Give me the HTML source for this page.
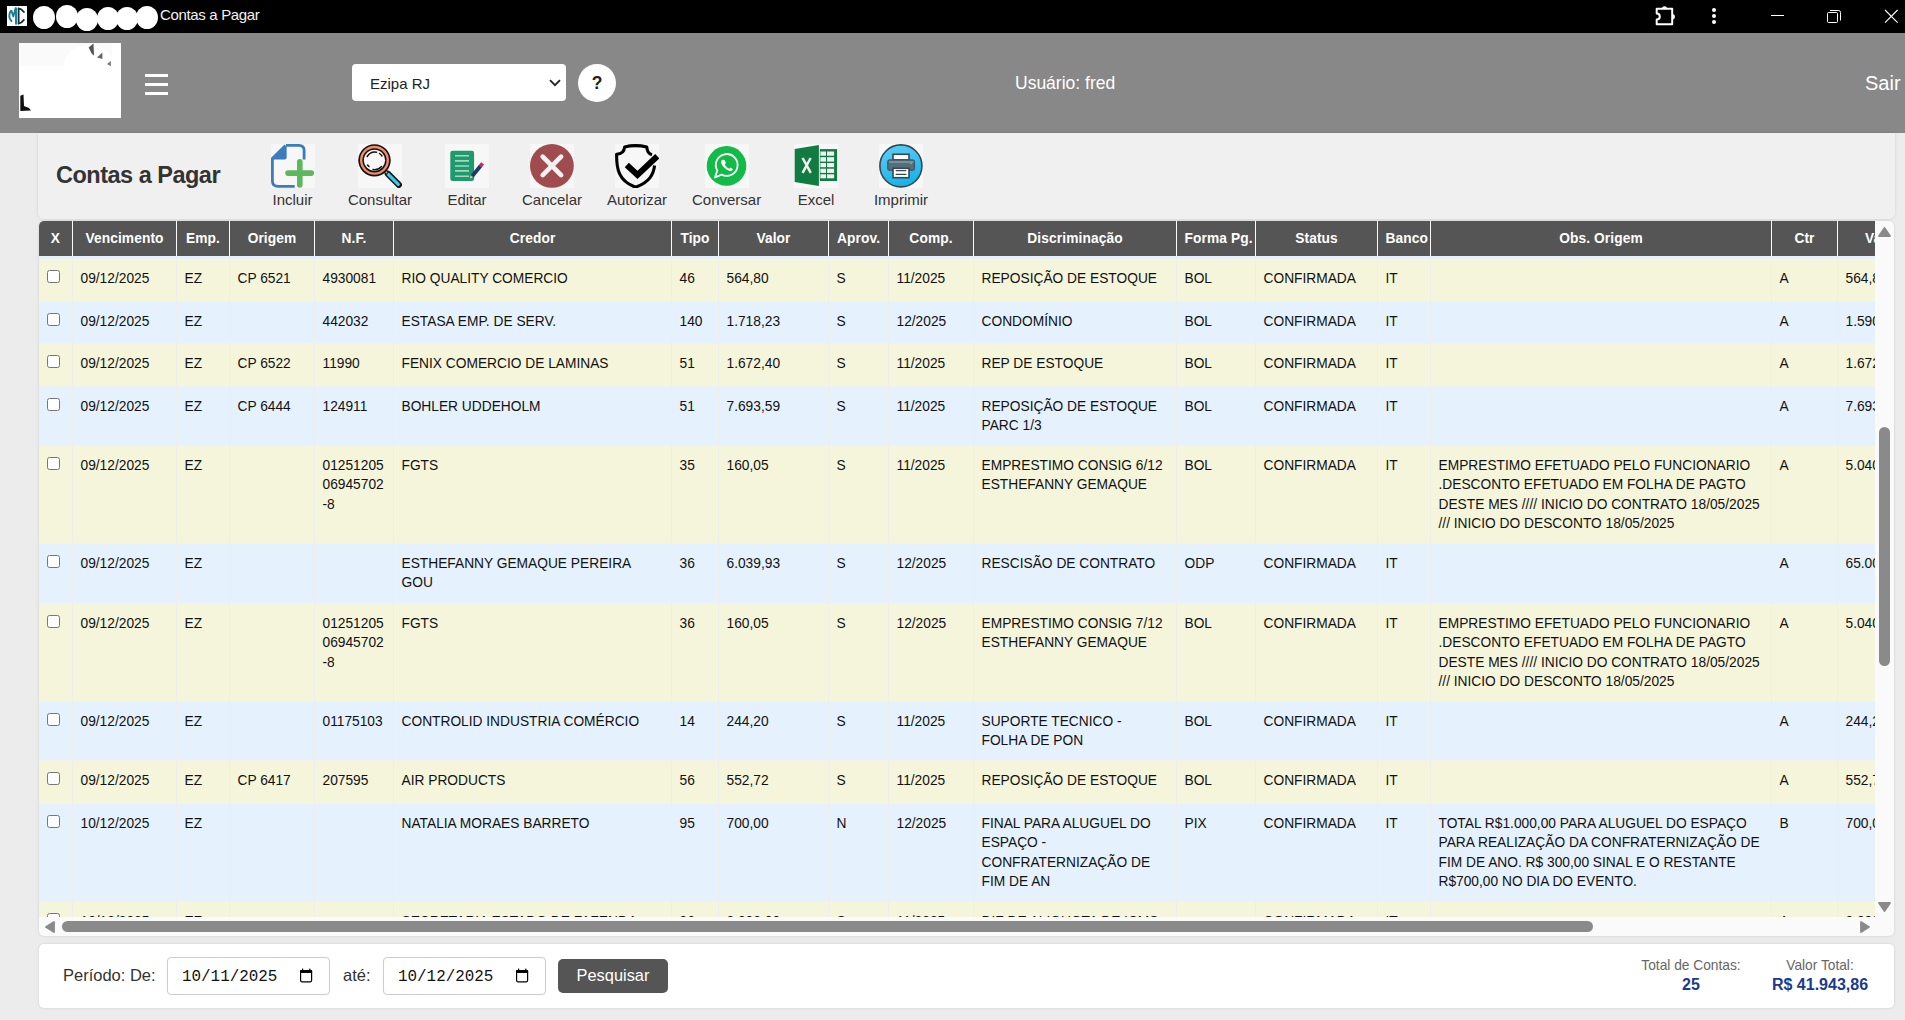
<!DOCTYPE html>
<html><head><meta charset="utf-8"><title>Contas a Pagar</title>
<style>
*{box-sizing:border-box;margin:0;padding:0}
html,body{width:1905px;height:1020px;overflow:hidden;background:#ececec;font-family:"Liberation Sans",sans-serif;position:relative}
.abs{position:absolute}
#titlebar{left:0;top:0;width:1905px;height:33px;background:#000}
#hdr{left:0;top:33px;width:1905px;height:100px;background:#888}
.card{position:absolute;box-shadow:0 0 3px rgba(0,0,0,.12)}
.tb{position:absolute;top:144px;width:120px;margin-left:-60px;text-align:center}
.tb .ic{position:absolute;left:38px;top:0;width:44px;height:44px;background:#f7f7f7}
.tb .lb{position:absolute;left:0;top:47px;width:120px;text-align:center;font-size:15px;color:#333;line-height:17px;white-space:nowrap}
.th{position:absolute;top:221px;height:35px;background:#555;color:#fff;font-weight:bold;font-size:13.75px;text-align:center;line-height:35px;white-space:nowrap;overflow:hidden;padding:0 7.5px;letter-spacing:0.1px}
.row{position:absolute;left:39px;width:1836px}
.td{position:absolute;top:0;bottom:0;font-size:13.75px;line-height:19.3px;color:#111;padding:11px 7.5px 9px 7.5px;overflow:hidden;white-space:normal}
.vl{position:absolute;width:1px;background:#eeeeec}
</style></head><body>

<div id="titlebar" class="abs">
<div class="abs" style="left:7px;top:6px;width:20px;height:20px;background:#fff"><svg width="20" height="20" viewBox="0 0 20 20"><path d="M9 1.8 V18.6" stroke="#0f7f8f" stroke-width="1.9"/><path d="M4.5 15.2 C2.5 13 2 11 2.4 9 C2.7 6.5 3.5 5 4.4 4.6 L6.3 10.5 L8.6 2.2" fill="none" stroke="#13808f" stroke-width="1.8" stroke-linejoin="round" stroke-linecap="round"/><path d="M16.9 6.1 C15.3 3.8 13.3 2.6 11.6 2.4 V17.6 C13.3 17.4 15.3 16 16.9 13.9" fill="none" stroke="#1a2a38" stroke-width="1.8" stroke-linecap="round"/></svg></div>
<div class="abs" style="left:33.3px;top:5.800000000000001px;width:22px;height:23px;border-radius:50%;background:#fff"></div>
<div class="abs" style="left:56px;top:4.800000000000001px;width:22px;height:23px;border-radius:50%;background:#fff"></div>
<div class="abs" style="left:76px;top:7.899999999999999px;width:22px;height:23px;border-radius:50%;background:#fff"></div>
<div class="abs" style="left:96.5px;top:6.800000000000001px;width:22px;height:23px;border-radius:50%;background:#fff"></div>
<div class="abs" style="left:116px;top:6.800000000000001px;width:22px;height:23px;border-radius:50%;background:#fff"></div>
<div class="abs" style="left:136.2px;top:5.800000000000001px;width:22px;height:23px;border-radius:50%;background:#fff"></div>
<div class="abs" style="left:160px;top:6px;font-size:15px;letter-spacing:-0.34px;color:#f2f2f2;line-height:18px;white-space:nowrap">Contas a Pagar</div>
<svg class="abs" style="left:1645px;top:0px" width="35" height="33" viewBox="0 0 35 33"><path d="M11.7 8.8 H27.2 V24.2 H11.7 V19.6 A3.1 3.1 0 0 0 11.7 13.4 Z" fill="none" stroke="#fff" stroke-width="2" stroke-linejoin="round"/><path d="M16.9 8.8 A2.6 2.6 0 0 1 22.1 8.8 Z" fill="#fff"/><path d="M27.2 14 A2.7 2.7 0 0 1 27.2 19.4 Z" fill="#fff"/></svg>
<div class="abs" style="left:1712px;top:8px;width:4px;height:4px;border-radius:50%;background:#fff"></div>
<div class="abs" style="left:1712px;top:14px;width:4px;height:4px;border-radius:50%;background:#fff"></div>
<div class="abs" style="left:1712px;top:20.4px;width:4px;height:4px;border-radius:50%;background:#fff"></div>
<div class="abs" style="left:1771px;top:15px;width:13px;height:1px;background:#fff"></div>
<svg class="abs" style="left:1826px;top:9px" width="16" height="16" viewBox="0 0 16 16"><rect x="1.5" y="3.5" width="10" height="10" rx="1" fill="none" stroke="#fff" stroke-width="1"/><path d="M4 1.5 H12.5 Q14.5 1.5 14.5 3.5 V11.5" fill="none" stroke="#fff" stroke-width="1"/></svg>
<svg class="abs" style="left:1884px;top:9px" width="15" height="15" viewBox="0 0 15 15"><path d="M1 1 L13.6 13.6 M13.6 1 L1 13.6" stroke="#fff" stroke-width="1.1"/></svg>
</div>
<div id="hdr" class="abs">
<div class="abs" style="left:19px;top:10px;width:102px;height:75px;background:#fff;overflow:hidden"><div class="abs" style="left:1px;top:0;width:92px;height:23px;background:#fafafa"></div><div class="abs" style="left:45px;top:2px;width:50px;height:40px;border-radius:50%;background:#fff"></div><svg class="abs" style="left:0;top:0" width="102" height="75" viewBox="0 0 102 75"><path d="M69.6 4.5 L74.5 0.5 L75 12.5 L73 11 Z" fill="#555"/><path d="M78 14.5 L83.4 9.4 L83.4 16.1 Z" fill="#666"/><path d="M88 21 L91.9 17.9 L91.9 23.2 Z" fill="#777"/><path d="M1.3 52.7 L4.5 51.5 L5 63 L10 65 L12 67.6 L1.3 68 Z" fill="#111"/></svg></div>
<div class="abs" style="left:145px;top:41px;width:23px;height:3px;background:#fff"></div>
<div class="abs" style="left:145px;top:50px;width:23px;height:3px;background:#fff"></div>
<div class="abs" style="left:145px;top:59px;width:23px;height:3px;background:#fff"></div>
<div class="abs" style="left:352px;top:31px;width:214px;height:37px;background:#fff;border-radius:4px"><div class="abs" style="left:18px;top:11px;font-size:15px;color:#222;line-height:18px">Ezipa RJ</div><svg class="abs" style="left:197px;top:15px" width="12" height="8" viewBox="0 0 12 8"><path d="M1 1.2 L6 6.2 L11 1.2" fill="none" stroke="#222" stroke-width="1.8"/></svg></div>
<div class="abs" style="left:578px;top:31px;width:38px;height:38px;background:#fff;border-radius:50%;text-align:center;font-weight:bold;font-size:17.5px;line-height:38px;color:#222">?</div>
<div class="abs" style="left:1015px;top:40px;font-size:17.5px;color:#fff;line-height:20px;white-space:nowrap">Usuário: fred</div>
<div class="abs" style="left:1865px;top:38px;font-size:20px;color:#fff;line-height:24px;white-space:nowrap">Sair</div>
</div>
<div class="card" style="left:38px;top:133px;width:1857px;height:86px;background:#f0f0f0;border-radius:0 0 6px 6px"></div>
<div class="abs" style="left:56px;top:162px;font-size:23.5px;letter-spacing:-0.5px;font-weight:bold;color:#333;line-height:26px;white-space:nowrap">Contas a Pagar</div>
<div class="tb" style="left:292.5px"><div class="ic"><svg width="44" height="44" viewBox="0 0 44 44"><path d="M15 1.4 H28 Q33.1 1.4 33.1 6.5 V15.5 M23.7 42.4 H7 Q1.4 42.4 1.4 37 V14.5 L14.5 1.4" fill="none" stroke="#3b7bc0" stroke-width="2.8" stroke-linejoin="round"/><path d="M1.4 15.6 L15.6 1.4 V13.5 Q15.6 15.6 13.5 15.6 Z" fill="#3b7bc0"/><path d="M28.8 17.7 V41 M17 29.1 H40.3" stroke="#5cb85c" stroke-width="5.6" stroke-linecap="round"/></svg></div><div class="lb">Incluir</div></div>
<div class="tb" style="left:380px"><div class="ic"><svg width="44" height="44" viewBox="0 0 44 44"><path d="M29.8 29.8 L40.8 40.8" stroke="#111" stroke-width="6.2" stroke-linecap="round"/><path d="M30.3 30.3 L40.3 40.3" stroke="#3ccbef" stroke-width="3.2" stroke-linecap="round"/><circle cx="28.3" cy="28.3" r="1.6" fill="#f0896a" stroke="#111" stroke-width="1"/><circle cx="16.5" cy="16.35" r="16.2" fill="#111"/><circle cx="16.5" cy="16.35" r="14.5" fill="#f58b68"/><circle cx="16.5" cy="16.35" r="12.1" fill="#111"/><circle cx="16.5" cy="16.35" r="10.6" fill="#f8f8f8"/><path d="M9.2 12.5 A9.2 9.2 0 0 1 18.5 8.2 M21.5 9.5 A9.2 9.2 0 0 1 24 12 M23.5 22.5 A9.2 9.2 0 0 1 15 25.5 M11 22.5 A9.2 9.2 0 0 1 9.5 21" fill="none" stroke="#111" stroke-width="1.5" stroke-linecap="round"/></svg></div><div class="lb">Consultar</div></div>
<div class="tb" style="left:467px"><div class="ic"><svg width="44" height="44" viewBox="0 0 44 44"><rect x="5.3" y="6.8" width="23.8" height="30.2" rx="2.2" fill="#1f9a6e"/><path d="M10 11.7 H24 M10 16.9 H24 M10 22 H24 M10 26.9 H24 M10 32.3 H24" stroke="#a3d9c2" stroke-width="1.6"/><path d="M26.5 33 L35.5 22" stroke="#1c3a66" stroke-width="3.8"/><path d="M35.3 22.2 L37.6 19.4" stroke="#d0285e" stroke-width="3.8"/><path d="M24.9 34.6 L25.6 30.9 L28.4 33.2 Z" fill="#e5c185"/></svg></div><div class="lb">Editar</div></div>
<div class="tb" style="left:552px"><div class="ic"><svg width="44" height="44" viewBox="0 0 44 44"><circle cx="21.9" cy="21.9" r="21.9" fill="#a04c4e"/><path d="M12.7 12.7 L31.1 31.1 M31.1 12.7 L12.7 31.1" stroke="#f2f2f2" stroke-width="4.7" stroke-linecap="round"/></svg></div><div class="lb">Cancelar</div></div>
<div class="tb" style="left:637px"><div class="ic"><svg width="44" height="44" viewBox="0 0 44 44"><path d="M37 10.8 C34 10 32 8 31.8 3 C27 1.8 23 1.6 20.5 1.6 C18 1.6 14 1.8 9.6 3 C9.3 7.8 6 10 1.6 10.2 C1.5 25 3.5 37 20.5 43.2 C35 38 38.5 30 39.6 21.5" fill="none" stroke="#000" stroke-width="3.1" stroke-linejoin="round"/><path d="M11.8 21 L22.5 31 L42.3 12.3" fill="none" stroke="#000" stroke-width="6" stroke-linejoin="miter"/></svg></div><div class="lb">Autorizar</div></div>
<div class="tb" style="left:726.6px"><div class="ic"><svg width="44" height="44" viewBox="0 0 44 44"><circle cx="21.5" cy="21.9" r="19.8" fill="#12bb47"/><path d="M12.3 26.5 A10.9 10.9 0 1 1 16.6 30.6 L10 33.5 Z" fill="none" stroke="#fff" stroke-width="1.8" stroke-linejoin="round"/><path d="M17.4 15.8 C16 16.6 15.6 18.4 16.8 20.6 C18.6 23.8 21.6 26.3 24.8 26.9 C26.3 27.2 27.6 26.5 27.9 25.2 L25.6 23.6 L24.3 24.8 C22.2 23.9 20.6 22.3 19.7 20.3 L20.9 19 L19.6 16 Z" fill="#fff"/></svg></div><div class="lb">Conversar</div></div>
<div class="tb" style="left:816px"><div class="ic"><svg width="44" height="44" viewBox="0 0 44 44"><path d="M0.7 5.1 L24.9 0.9 V41.9 L0.7 37.9 Z" fill="#107c41"/><rect x="25.8" y="5.1" width="17.3" height="31.9" fill="#107c41"/><g fill="#f2f2f2"><rect x="26.4" y="7.5" width="5.6" height="4.2"/><rect x="33" y="7.5" width="7.1" height="4.2"/><rect x="26.4" y="13.2" width="5.6" height="4.4"/><rect x="33" y="13.2" width="7.1" height="4.4"/><rect x="26.4" y="19" width="5.6" height="4.2"/><rect x="33" y="19" width="7.1" height="4.2"/><rect x="26.4" y="24.7" width="5.6" height="4.2"/><rect x="33" y="24.7" width="7.1" height="4.2"/><rect x="26.4" y="30.3" width="5.6" height="4"/><rect x="33" y="30.3" width="7.1" height="4"/></g><path d="M8.6 14 L16.8 28.8 M16.6 14 L8.6 28.8" stroke="#f2f2f2" stroke-width="2.5"/></svg></div><div class="lb">Excel</div></div>
<div class="tb" style="left:901px"><div class="ic"><svg width="44" height="44" viewBox="0 0 44 44"><defs><linearGradient id="pg" x1="0" y1="0" x2="0.3" y2="1"><stop offset="0" stop-color="#5fd0f8"/><stop offset="1" stop-color="#18b4ea"/></linearGradient></defs><circle cx="21.9" cy="21.9" r="21" fill="url(#pg)" stroke="#37474f" stroke-width="1.6"/><rect x="14" y="10.3" width="16" height="5.5" fill="#fff" stroke="#37474f" stroke-width="1.6"/><rect x="8.8" y="15.9" width="26.6" height="10.3" rx="2.3" fill="#546e7a" stroke="#455a64" stroke-width="1.4"/><rect x="10" y="17" width="24.5" height="2" fill="#78909c"/><rect x="14" y="24.3" width="16" height="9.4" fill="#fff" stroke="#37474f" stroke-width="1.6"/><path d="M17.3 26.6 H26.8 M17.3 30.4 H26.8" stroke="#37474f" stroke-width="1.4" stroke-linecap="round"/><circle cx="32" cy="19.3" r="0.9" fill="#8bc34a"/></svg></div><div class="lb">Imprimir</div></div>
<div class="card" style="left:39px;top:221px;width:1855px;height:715px;background:#fafafa;border-radius:5px;overflow:hidden">
<div class="abs" style="left:0;top:0;width:1836px;height:696px;overflow:hidden">
<div class="row" style="left:0;top:37px;height:43px;background:#f5f5dc">
<div class="abs" style="left:8px;top:12px;width:13px;height:13px;border:1px solid #767676;border-radius:2.5px;background:#fff"></div>
<div class="td" style="left:34px;width:103px;">09/12/2025</div>
<div class="td" style="left:138px;width:52px;">EZ</div>
<div class="td" style="left:191px;width:84px;">CP 6521</div>
<div class="td" style="left:276px;width:78px;">4930081</div>
<div class="td" style="left:355px;width:277px;">RIO QUALITY COMERCIO</div>
<div class="td" style="left:633px;width:46px;">46</div>
<div class="td" style="left:680px;width:109px;">564,80</div>
<div class="td" style="left:790px;width:59px;">S</div>
<div class="td" style="left:850px;width:84px;">11/2025</div>
<div class="td" style="left:935px;width:202px;">REPOSIÇÃO DE ESTOQUE</div>
<div class="td" style="left:1138px;width:78px;">BOL</div>
<div class="td" style="left:1217px;width:121px;">CONFIRMADA</div>
<div class="td" style="left:1339px;width:52px;">IT</div>
<div class="td" style="left:1733px;width:65px;">A</div>
<div class="td" style="left:1799px;width:88px;">564,80</div>
</div>
<div class="row" style="left:0;top:80px;height:42px;background:#e5f1fc">
<div class="abs" style="left:8px;top:12px;width:13px;height:13px;border:1px solid #767676;border-radius:2.5px;background:#fff"></div>
<div class="td" style="left:34px;width:103px;">09/12/2025</div>
<div class="td" style="left:138px;width:52px;">EZ</div>
<div class="td" style="left:276px;width:78px;">442032</div>
<div class="td" style="left:355px;width:277px;">ESTASA EMP. DE SERV.</div>
<div class="td" style="left:633px;width:46px;">140</div>
<div class="td" style="left:680px;width:109px;">1.718,23</div>
<div class="td" style="left:790px;width:59px;">S</div>
<div class="td" style="left:850px;width:84px;">12/2025</div>
<div class="td" style="left:935px;width:202px;">CONDOMÍNIO</div>
<div class="td" style="left:1138px;width:78px;">BOL</div>
<div class="td" style="left:1217px;width:121px;">CONFIRMADA</div>
<div class="td" style="left:1339px;width:52px;">IT</div>
<div class="td" style="left:1733px;width:65px;">A</div>
<div class="td" style="left:1799px;width:88px;">1.590,00</div>
<div class="abs" style="left:0;top:0;width:1836px;height:1px;background:#f1f1ee"></div>
</div>
<div class="row" style="left:0;top:122px;height:43px;background:#f5f5dc">
<div class="abs" style="left:8px;top:12px;width:13px;height:13px;border:1px solid #767676;border-radius:2.5px;background:#fff"></div>
<div class="td" style="left:34px;width:103px;">09/12/2025</div>
<div class="td" style="left:138px;width:52px;">EZ</div>
<div class="td" style="left:191px;width:84px;">CP 6522</div>
<div class="td" style="left:276px;width:78px;">11990</div>
<div class="td" style="left:355px;width:277px;">FENIX COMERCIO DE LAMINAS</div>
<div class="td" style="left:633px;width:46px;">51</div>
<div class="td" style="left:680px;width:109px;">1.672,40</div>
<div class="td" style="left:790px;width:59px;">S</div>
<div class="td" style="left:850px;width:84px;">11/2025</div>
<div class="td" style="left:935px;width:202px;">REP DE ESTOQUE</div>
<div class="td" style="left:1138px;width:78px;">BOL</div>
<div class="td" style="left:1217px;width:121px;">CONFIRMADA</div>
<div class="td" style="left:1339px;width:52px;">IT</div>
<div class="td" style="left:1733px;width:65px;">A</div>
<div class="td" style="left:1799px;width:88px;">1.672,40</div>
<div class="abs" style="left:0;top:0;width:1836px;height:1px;background:#f1f1ee"></div>
</div>
<div class="row" style="left:0;top:165px;height:59px;background:#e5f1fc">
<div class="abs" style="left:8px;top:12px;width:13px;height:13px;border:1px solid #767676;border-radius:2.5px;background:#fff"></div>
<div class="td" style="left:34px;width:103px;">09/12/2025</div>
<div class="td" style="left:138px;width:52px;">EZ</div>
<div class="td" style="left:191px;width:84px;">CP 6444</div>
<div class="td" style="left:276px;width:78px;">124911</div>
<div class="td" style="left:355px;width:277px;">BOHLER UDDEHOLM</div>
<div class="td" style="left:633px;width:46px;">51</div>
<div class="td" style="left:680px;width:109px;">7.693,59</div>
<div class="td" style="left:790px;width:59px;">S</div>
<div class="td" style="left:850px;width:84px;">11/2025</div>
<div class="td" style="left:935px;width:202px;">REPOSIÇÃO DE ESTOQUE<br>PARC 1/3</div>
<div class="td" style="left:1138px;width:78px;">BOL</div>
<div class="td" style="left:1217px;width:121px;">CONFIRMADA</div>
<div class="td" style="left:1339px;width:52px;">IT</div>
<div class="td" style="left:1733px;width:65px;">A</div>
<div class="td" style="left:1799px;width:88px;">7.693,59</div>
<div class="abs" style="left:0;top:0;width:1836px;height:1px;background:#f1f1ee"></div>
</div>
<div class="row" style="left:0;top:224px;height:98px;background:#f5f5dc">
<div class="abs" style="left:8px;top:12px;width:13px;height:13px;border:1px solid #767676;border-radius:2.5px;background:#fff"></div>
<div class="td" style="left:34px;width:103px;">09/12/2025</div>
<div class="td" style="left:138px;width:52px;">EZ</div>
<div class="td" style="left:276px;width:78px;">01251205<br>06945702<br>-8</div>
<div class="td" style="left:355px;width:277px;">FGTS</div>
<div class="td" style="left:633px;width:46px;">35</div>
<div class="td" style="left:680px;width:109px;">160,05</div>
<div class="td" style="left:790px;width:59px;">S</div>
<div class="td" style="left:850px;width:84px;">11/2025</div>
<div class="td" style="left:935px;width:202px;">EMPRESTIMO CONSIG 6/12<br>ESTHEFANNY GEMAQUE</div>
<div class="td" style="left:1138px;width:78px;">BOL</div>
<div class="td" style="left:1217px;width:121px;">CONFIRMADA</div>
<div class="td" style="left:1339px;width:52px;">IT</div>
<div class="td" style="left:1392px;width:340px;">EMPRESTIMO EFETUADO PELO FUNCIONARIO .DESCONTO EFETUADO EM FOLHA DE PAGTO DESTE MES //// INICIO DO CONTRATO 18/05/2025 /// INICIO DO DESCONTO 18/05/2025</div>
<div class="td" style="left:1733px;width:65px;">A</div>
<div class="td" style="left:1799px;width:88px;">5.040,00</div>
<div class="abs" style="left:0;top:0;width:1836px;height:1px;background:#f1f1ee"></div>
</div>
<div class="row" style="left:0;top:322px;height:60px;background:#e5f1fc">
<div class="abs" style="left:8px;top:12px;width:13px;height:13px;border:1px solid #767676;border-radius:2.5px;background:#fff"></div>
<div class="td" style="left:34px;width:103px;">09/12/2025</div>
<div class="td" style="left:138px;width:52px;">EZ</div>
<div class="td" style="left:355px;width:277px;">ESTHEFANNY GEMAQUE PEREIRA<br>GOU</div>
<div class="td" style="left:633px;width:46px;">36</div>
<div class="td" style="left:680px;width:109px;">6.039,93</div>
<div class="td" style="left:790px;width:59px;">S</div>
<div class="td" style="left:850px;width:84px;">12/2025</div>
<div class="td" style="left:935px;width:202px;">RESCISÃO DE CONTRATO</div>
<div class="td" style="left:1138px;width:78px;">ODP</div>
<div class="td" style="left:1217px;width:121px;">CONFIRMADA</div>
<div class="td" style="left:1339px;width:52px;">IT</div>
<div class="td" style="left:1733px;width:65px;">A</div>
<div class="td" style="left:1799px;width:88px;">65.000,00</div>
<div class="abs" style="left:0;top:0;width:1836px;height:1px;background:#f1f1ee"></div>
</div>
<div class="row" style="left:0;top:382px;height:98px;background:#f5f5dc">
<div class="abs" style="left:8px;top:12px;width:13px;height:13px;border:1px solid #767676;border-radius:2.5px;background:#fff"></div>
<div class="td" style="left:34px;width:103px;">09/12/2025</div>
<div class="td" style="left:138px;width:52px;">EZ</div>
<div class="td" style="left:276px;width:78px;">01251205<br>06945702<br>-8</div>
<div class="td" style="left:355px;width:277px;">FGTS</div>
<div class="td" style="left:633px;width:46px;">36</div>
<div class="td" style="left:680px;width:109px;">160,05</div>
<div class="td" style="left:790px;width:59px;">S</div>
<div class="td" style="left:850px;width:84px;">12/2025</div>
<div class="td" style="left:935px;width:202px;">EMPRESTIMO CONSIG 7/12<br>ESTHEFANNY GEMAQUE</div>
<div class="td" style="left:1138px;width:78px;">BOL</div>
<div class="td" style="left:1217px;width:121px;">CONFIRMADA</div>
<div class="td" style="left:1339px;width:52px;">IT</div>
<div class="td" style="left:1392px;width:340px;">EMPRESTIMO EFETUADO PELO FUNCIONARIO .DESCONTO EFETUADO EM FOLHA DE PAGTO DESTE MES //// INICIO DO CONTRATO 18/05/2025 /// INICIO DO DESCONTO 18/05/2025</div>
<div class="td" style="left:1733px;width:65px;">A</div>
<div class="td" style="left:1799px;width:88px;">5.040,00</div>
<div class="abs" style="left:0;top:0;width:1836px;height:1px;background:#f1f1ee"></div>
</div>
<div class="row" style="left:0;top:480px;height:59px;background:#e5f1fc">
<div class="abs" style="left:8px;top:12px;width:13px;height:13px;border:1px solid #767676;border-radius:2.5px;background:#fff"></div>
<div class="td" style="left:34px;width:103px;">09/12/2025</div>
<div class="td" style="left:138px;width:52px;">EZ</div>
<div class="td" style="left:276px;width:78px;">01175103</div>
<div class="td" style="left:355px;width:277px;">CONTROLID INDUSTRIA COMÉRCIO</div>
<div class="td" style="left:633px;width:46px;">14</div>
<div class="td" style="left:680px;width:109px;">244,20</div>
<div class="td" style="left:790px;width:59px;">S</div>
<div class="td" style="left:850px;width:84px;">11/2025</div>
<div class="td" style="left:935px;width:202px;">SUPORTE TECNICO -<br>FOLHA DE PON</div>
<div class="td" style="left:1138px;width:78px;">BOL</div>
<div class="td" style="left:1217px;width:121px;">CONFIRMADA</div>
<div class="td" style="left:1339px;width:52px;">IT</div>
<div class="td" style="left:1733px;width:65px;">A</div>
<div class="td" style="left:1799px;width:88px;">244,20</div>
<div class="abs" style="left:0;top:0;width:1836px;height:1px;background:#f1f1ee"></div>
</div>
<div class="row" style="left:0;top:539px;height:43px;background:#f5f5dc">
<div class="abs" style="left:8px;top:12px;width:13px;height:13px;border:1px solid #767676;border-radius:2.5px;background:#fff"></div>
<div class="td" style="left:34px;width:103px;">09/12/2025</div>
<div class="td" style="left:138px;width:52px;">EZ</div>
<div class="td" style="left:191px;width:84px;">CP 6417</div>
<div class="td" style="left:276px;width:78px;">207595</div>
<div class="td" style="left:355px;width:277px;">AIR PRODUCTS</div>
<div class="td" style="left:633px;width:46px;">56</div>
<div class="td" style="left:680px;width:109px;">552,72</div>
<div class="td" style="left:790px;width:59px;">S</div>
<div class="td" style="left:850px;width:84px;">11/2025</div>
<div class="td" style="left:935px;width:202px;">REPOSIÇÃO DE ESTOQUE</div>
<div class="td" style="left:1138px;width:78px;">BOL</div>
<div class="td" style="left:1217px;width:121px;">CONFIRMADA</div>
<div class="td" style="left:1339px;width:52px;">IT</div>
<div class="td" style="left:1733px;width:65px;">A</div>
<div class="td" style="left:1799px;width:88px;">552,72</div>
<div class="abs" style="left:0;top:0;width:1836px;height:1px;background:#f1f1ee"></div>
</div>
<div class="row" style="left:0;top:582px;height:98px;background:#e5f1fc">
<div class="abs" style="left:8px;top:12px;width:13px;height:13px;border:1px solid #767676;border-radius:2.5px;background:#fff"></div>
<div class="td" style="left:34px;width:103px;">10/12/2025</div>
<div class="td" style="left:138px;width:52px;">EZ</div>
<div class="td" style="left:355px;width:277px;">NATALIA MORAES BARRETO</div>
<div class="td" style="left:633px;width:46px;">95</div>
<div class="td" style="left:680px;width:109px;">700,00</div>
<div class="td" style="left:790px;width:59px;">N</div>
<div class="td" style="left:850px;width:84px;">12/2025</div>
<div class="td" style="left:935px;width:202px;">FINAL PARA ALUGUEL DO<br>ESPAÇO -<br>CONFRATERNIZAÇÃO DE<br>FIM DE AN</div>
<div class="td" style="left:1138px;width:78px;">PIX</div>
<div class="td" style="left:1217px;width:121px;">CONFIRMADA</div>
<div class="td" style="left:1339px;width:52px;">IT</div>
<div class="td" style="left:1392px;width:340px;">TOTAL R$1.000,00 PARA ALUGUEL DO ESPAÇO PARA REALIZAÇÃO DA CONFRATERNIZAÇÃO DE FIM DE ANO. R$ 300,00 SINAL E O RESTANTE R$700,00 NO DIA DO EVENTO.</div>
<div class="td" style="left:1733px;width:65px;">B</div>
<div class="td" style="left:1799px;width:88px;">700,00</div>
<div class="abs" style="left:0;top:0;width:1836px;height:1px;background:#f1f1ee"></div>
</div>
<div class="row" style="left:0;top:680px;height:99px;background:#f5f5dc">
<div class="abs" style="left:8px;top:12px;width:13px;height:13px;border:1px solid #767676;border-radius:2.5px;background:#fff"></div>
<div class="td" style="left:34px;width:103px;">10/12/2025</div>
<div class="td" style="left:138px;width:52px;">EZ</div>
<div class="td" style="left:355px;width:277px;">SECRETARIA ESTADO DE FAZENDA</div>
<div class="td" style="left:633px;width:46px;">96</div>
<div class="td" style="left:680px;width:109px;">2.000,00</div>
<div class="td" style="left:790px;width:59px;">S</div>
<div class="td" style="left:850px;width:84px;">11/2025</div>
<div class="td" style="left:935px;width:202px;">DIF DE ALIQUOTA DE ICMS</div>
<div class="td" style="left:1217px;width:121px;">CONFIRMADA</div>
<div class="td" style="left:1339px;width:52px;">IT</div>
<div class="td" style="left:1733px;width:65px;">A</div>
<div class="td" style="left:1799px;width:88px;">2.000,00</div>
<div class="abs" style="left:0;top:0;width:1836px;height:1px;background:#f1f1ee"></div>
</div>
<div class="vl" style="left:33px;top:35px;height:700px"></div>
<div class="vl" style="left:137px;top:35px;height:700px"></div>
<div class="vl" style="left:190px;top:35px;height:700px"></div>
<div class="vl" style="left:275px;top:35px;height:700px"></div>
<div class="vl" style="left:354px;top:35px;height:700px"></div>
<div class="vl" style="left:632px;top:35px;height:700px"></div>
<div class="vl" style="left:679px;top:35px;height:700px"></div>
<div class="vl" style="left:789px;top:35px;height:700px"></div>
<div class="vl" style="left:849px;top:35px;height:700px"></div>
<div class="vl" style="left:934px;top:35px;height:700px"></div>
<div class="vl" style="left:1137px;top:35px;height:700px"></div>
<div class="vl" style="left:1216px;top:35px;height:700px"></div>
<div class="vl" style="left:1338px;top:35px;height:700px"></div>
<div class="vl" style="left:1391px;top:35px;height:700px"></div>
<div class="vl" style="left:1732px;top:35px;height:700px"></div>
<div class="vl" style="left:1798px;top:35px;height:700px"></div>
<div class="th" style="top:0;left:0px;width:33px;border-top-left-radius:4px;">X</div>
<div class="th" style="top:0;left:34px;width:103px;">Vencimento</div>
<div class="th" style="top:0;left:138px;width:52px;">Emp.</div>
<div class="th" style="top:0;left:191px;width:84px;">Origem</div>
<div class="th" style="top:0;left:276px;width:78px;">N.F.</div>
<div class="th" style="top:0;left:355px;width:277px;">Credor</div>
<div class="th" style="top:0;left:633px;width:46px;">Tipo</div>
<div class="th" style="top:0;left:680px;width:109px;">Valor</div>
<div class="th" style="top:0;left:790px;width:59px;">Aprov.</div>
<div class="th" style="top:0;left:850px;width:84px;">Comp.</div>
<div class="th" style="top:0;left:935px;width:202px;">Discriminação</div>
<div class="th" style="top:0;left:1138px;width:78px;">Forma Pg.</div>
<div class="th" style="top:0;left:1217px;width:121px;">Status</div>
<div class="th" style="top:0;left:1339px;width:52px;">Banco</div>
<div class="th" style="top:0;left:1392px;width:340px;">Obs. Origem</div>
<div class="th" style="top:0;left:1733px;width:65px;">Ctr</div>
<div class="th" style="top:0;left:1799px;width:88px;">Valor</div>
<div class="abs" style="left:0;top:35px;width:1836px;height:3px;background:#e6f0fb"></div>
</div>
<svg class="abs" style="left:1839px;top:6px" width="13" height="10" viewBox="0 0 13 10"><path d="M6.5 1 L12 9 H1 Z" fill="#8a8a8a" stroke="#8a8a8a" stroke-width="1.8" stroke-linejoin="round"/></svg>
<svg class="abs" style="left:1839px;top:681px" width="13" height="10" viewBox="0 0 13 10"><path d="M6.5 9 L12 1 H1 Z" fill="#8a8a8a" stroke="#8a8a8a" stroke-width="1.8" stroke-linejoin="round"/></svg>
<div class="abs" style="left:1840px;top:206px;width:11px;height:239px;border-radius:6px;background:#8a8a8a"></div>
<svg class="abs" style="left:6px;top:700px" width="10" height="12" viewBox="0 0 10 12"><path d="M1 6 L9 1 V11 Z" fill="#8a8a8a" stroke="#8a8a8a" stroke-width="1.8" stroke-linejoin="round"/></svg>
<svg class="abs" style="left:1821px;top:700px" width="10" height="12" viewBox="0 0 10 12"><path d="M9 6 L1 1 V11 Z" fill="#8a8a8a" stroke="#8a8a8a" stroke-width="1.8" stroke-linejoin="round"/></svg>
<div class="abs" style="left:23px;top:700px;width:1531px;height:11px;border-radius:6px;background:#8a8a8a"></div>
</div>
<div class="card" style="left:39px;top:944px;width:1855px;height:64px;background:#fff;border-radius:5px">
<div class="abs" style="left:24px;top:21px;font-size:16.5px;color:#333;line-height:20px;white-space:nowrap">Período: De:</div>
<div class="abs" style="left:128px;top:13px;width:163px;height:38px;border:1px solid #ccc;border-radius:4px;background:#fff"><div class="abs" style="left:14px;top:10px;font-family:'Liberation Mono',monospace;font-size:15.9px;line-height:18px;color:#111;white-space:nowrap">10/11/2025</div><svg class="abs" style="left:132px;top:10px" width="14" height="16" viewBox="0 0 14 16"><rect x="2" y="0.6" width="1.2" height="2"/><rect x="9.2" y="0.6" width="1.2" height="2"/><rect x="0.6" y="2.6" width="11" height="11.2" rx="1.2" fill="none" stroke="#000" stroke-width="1.2"/><rect x="0" y="2" width="12.2" height="2.9" rx="1" fill="#000"/></svg></div>
<div class="abs" style="left:344px;top:13px;width:163px;height:38px;border:1px solid #ccc;border-radius:4px;background:#fff"><div class="abs" style="left:14px;top:10px;font-family:'Liberation Mono',monospace;font-size:15.9px;line-height:18px;color:#111;white-space:nowrap">10/12/2025</div><svg class="abs" style="left:132px;top:10px" width="14" height="16" viewBox="0 0 14 16"><rect x="2" y="0.6" width="1.2" height="2"/><rect x="9.2" y="0.6" width="1.2" height="2"/><rect x="0.6" y="2.6" width="11" height="11.2" rx="1.2" fill="none" stroke="#000" stroke-width="1.2"/><rect x="0" y="2" width="12.2" height="2.9" rx="1" fill="#000"/></svg></div>
<div class="abs" style="left:304px;top:21px;font-size:16.5px;color:#333;line-height:20px;white-space:nowrap">até:</div>
<div class="abs" style="left:519px;top:15px;width:110px;height:34px;border-radius:5px;background:#555;color:#fff;font-size:16.4px;line-height:32px;text-align:center">Pesquisar</div>
<div class="abs" style="left:1592px;top:14px;width:120px;text-align:center;font-size:13.75px;color:#666;line-height:16px">Total de Contas:<br><b style="color:#1a3a8c;font-size:16px;line-height:22px">25</b></div>
<div class="abs" style="left:1721px;top:14px;width:120px;text-align:center;font-size:13.75px;color:#666;line-height:16px">Valor Total:<br><b style="color:#1a3a8c;font-size:16px;line-height:22px">R$ 41.943,86</b></div>
</div>
</body></html>
